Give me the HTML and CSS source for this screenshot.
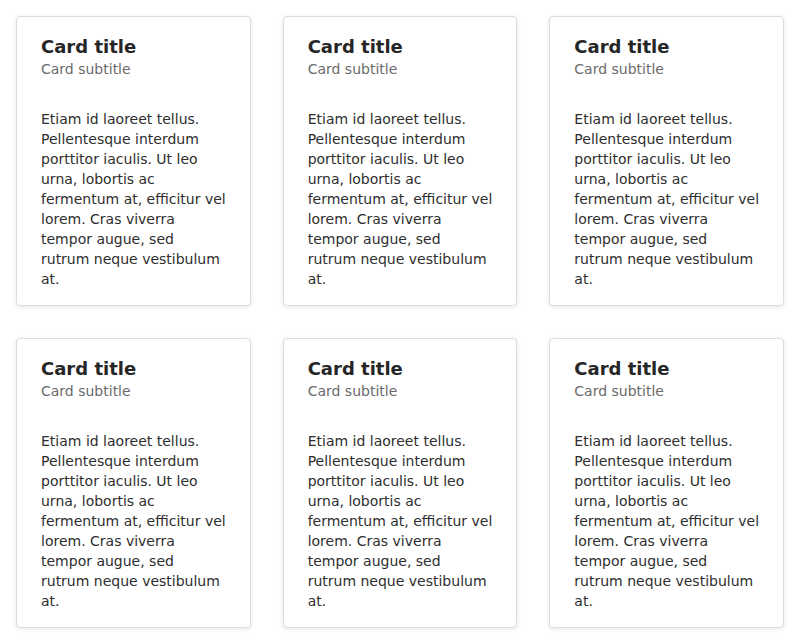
FILE: index.html
```html
<!DOCTYPE html>
<html lang="en">
<head>
<meta charset="utf-8">
<title>Cards</title>
<link rel="stylesheet" href="styles.css">
</head>
<body>
<main class="grid">
  <article class="card">
    <h2 class="card-title">Card title</h2>
    <p class="card-subtitle">Card subtitle</p>
    <p class="card-text">Etiam id laoreet tellus. Pellentesque interdum porttitor iaculis. Ut leo urna, lobortis ac fermentum at, efficitur vel lorem. Cras viverra tempor augue, sed rutrum neque vestibulum at.</p>
  </article>
  <article class="card">
    <h2 class="card-title">Card title</h2>
    <p class="card-subtitle">Card subtitle</p>
    <p class="card-text">Etiam id laoreet tellus. Pellentesque interdum porttitor iaculis. Ut leo urna, lobortis ac fermentum at, efficitur vel lorem. Cras viverra tempor augue, sed rutrum neque vestibulum at.</p>
  </article>
  <article class="card">
    <h2 class="card-title">Card title</h2>
    <p class="card-subtitle">Card subtitle</p>
    <p class="card-text">Etiam id laoreet tellus. Pellentesque interdum porttitor iaculis. Ut leo urna, lobortis ac fermentum at, efficitur vel lorem. Cras viverra tempor augue, sed rutrum neque vestibulum at.</p>
  </article>
  <article class="card">
    <h2 class="card-title">Card title</h2>
    <p class="card-subtitle">Card subtitle</p>
    <p class="card-text">Etiam id laoreet tellus. Pellentesque interdum porttitor iaculis. Ut leo urna, lobortis ac fermentum at, efficitur vel lorem. Cras viverra tempor augue, sed rutrum neque vestibulum at.</p>
  </article>
  <article class="card">
    <h2 class="card-title">Card title</h2>
    <p class="card-subtitle">Card subtitle</p>
    <p class="card-text">Etiam id laoreet tellus. Pellentesque interdum porttitor iaculis. Ut leo urna, lobortis ac fermentum at, efficitur vel lorem. Cras viverra tempor augue, sed rutrum neque vestibulum at.</p>
  </article>
  <article class="card">
    <h2 class="card-title">Card title</h2>
    <p class="card-subtitle">Card subtitle</p>
    <p class="card-text">Etiam id laoreet tellus. Pellentesque interdum porttitor iaculis. Ut leo urna, lobortis ac fermentum at, efficitur vel lorem. Cras viverra tempor augue, sed rutrum neque vestibulum at.</p>
  </article>
</main>
</body>
</html>
```

FILE: styles.css
```css
* { box-sizing: border-box; }
html, body { margin: 0; padding: 0; background: #fff; }
body {
  font-family: "DejaVu Sans", sans-serif;
  color: #333;
}
.grid {
  display: grid;
  grid-template-columns: repeat(3, 1fr);
  gap: 32px;
  padding: 16px;
}
.card {
  border: 1px solid #dcdcdc;
  border-radius: 4px;
  background: #fff;
  box-shadow: 0 1px 5px rgba(0, 0, 0, 0.1);
  padding: 18px 23px 16px 24px;
}
.card-title {
  margin: 0;
  font-size: 18px;
  line-height: 24px;
  font-weight: bold;
  color: #262626;
}
.card-subtitle {
  margin: 0;
  font-size: 14px;
  line-height: 20px;
  color: #6b6b6b;
}
.card-text {
  margin: 30px 0 0;
  font-size: 14px;
  line-height: 20px;
  color: #2e2e2e;
}
```
